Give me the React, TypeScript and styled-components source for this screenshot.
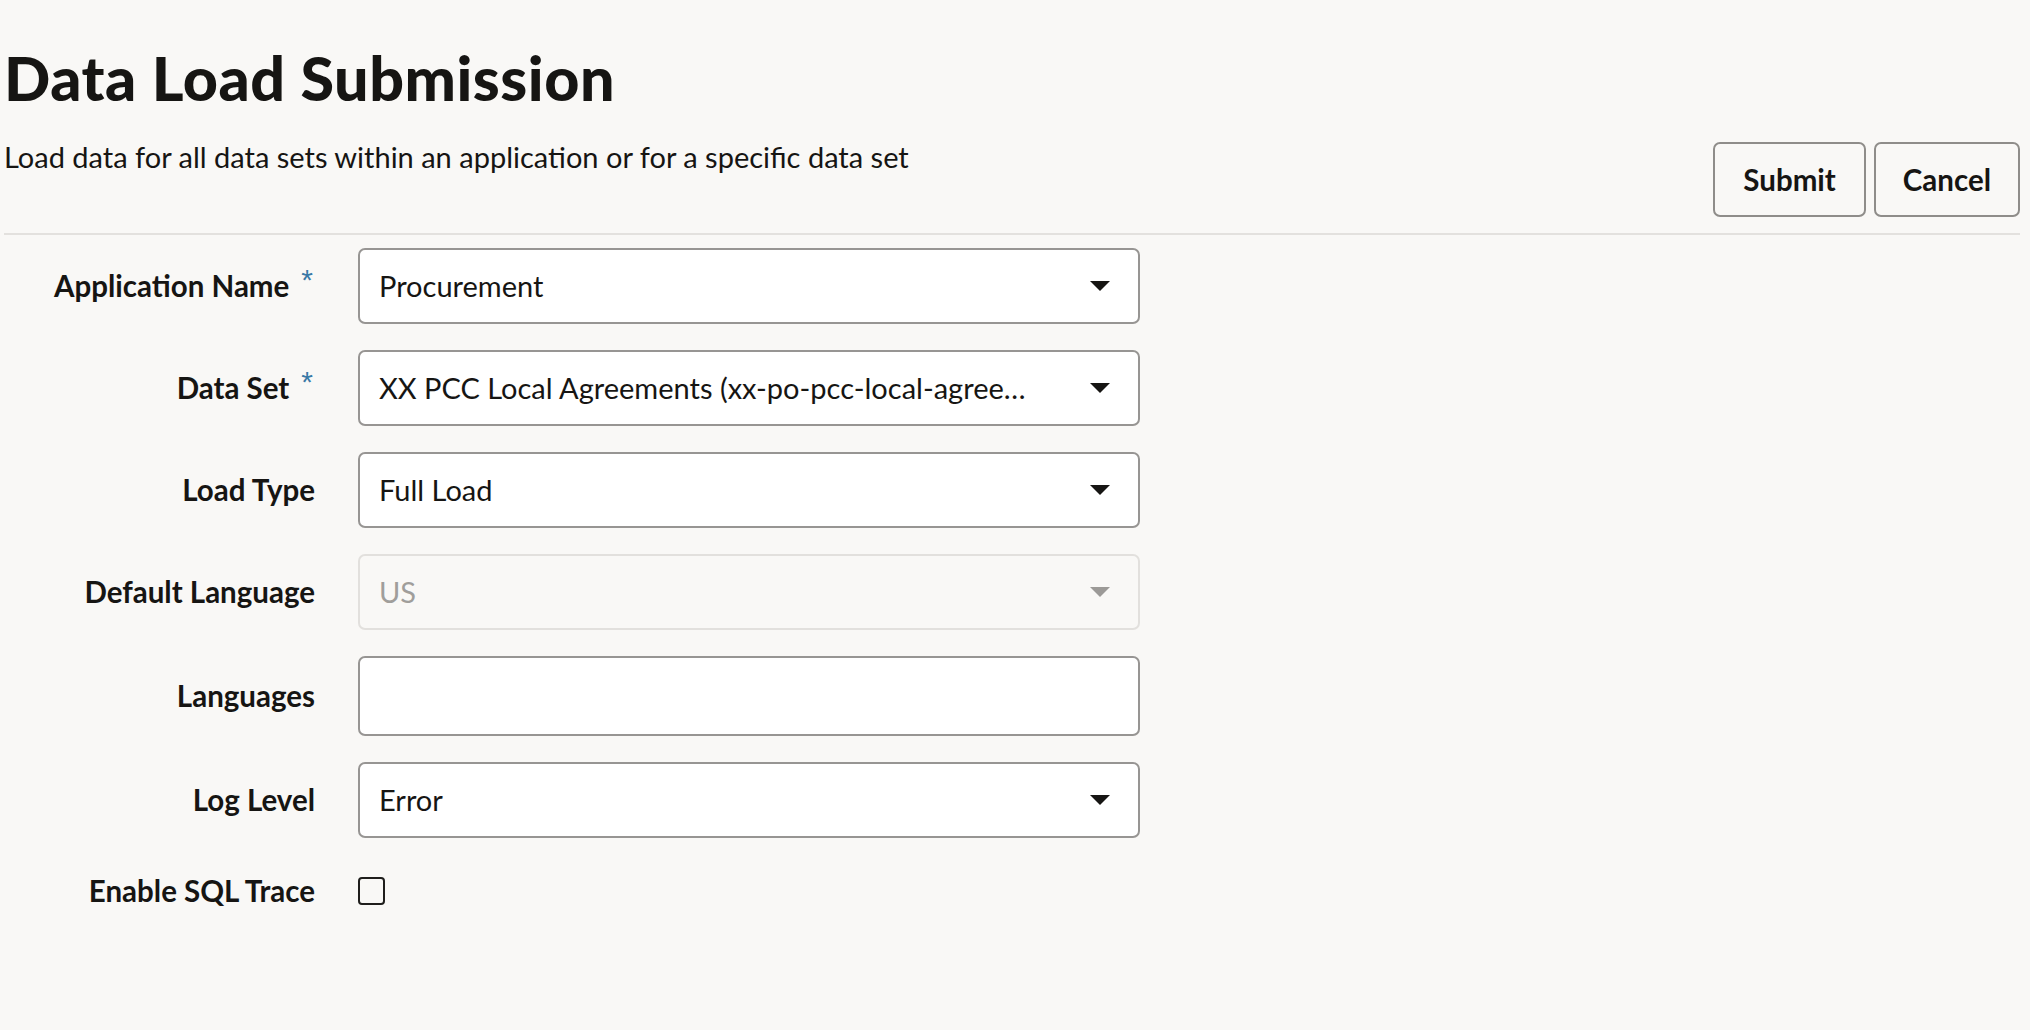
import React from 'react';
import styled, { createGlobalStyle } from 'styled-components';

const GlobalStyle = createGlobalStyle`
  html, body { margin: 0; padding: 0; background: #f9f8f6; }
  body { font-family: Lato, "Liberation Sans", sans-serif; color: #161513; }
  * { box-sizing: border-box; }
`;

const Page = styled.div`
  padding: 0 10px 0 4px;
  min-height: 1030px;
`;

const Title = styled.h1`
  margin: 0;
  padding-top: 42px;
  font-size: 61px;
  line-height: 72px;
  font-weight: 900;
  letter-spacing: 0.5px;
`;

const SubRow = styled.div`
  display: flex;
  justify-content: space-between;
  align-items: flex-start;
  margin-top: 25px;
  padding-bottom: 16px;
  border-bottom: 2px solid #e3e1de;
`;

const Subtitle = styled.p`
  margin: 0;
  font-size: 29px;
  line-height: 36px;
  font-weight: 400;
`;

const Toolbar = styled.div`
  display: flex;
  gap: 8px;
  margin-top: 3px;
`;

const Button = styled.button<{ $px?: number }>`
  height: 75px;
  padding: 0 ${(p) => p.$px ?? 30}px;
  border: 2px solid #8f8d8a;
  border-radius: 7px;
  background: transparent;
  color: #161513;
  font-family: Lato, "Liberation Sans", sans-serif;
  font-size: 29.5px;
  font-weight: 700;
  cursor: pointer;
`;

const Form = styled.div`
  display: grid;
  grid-template-columns: 311px 782px;
  column-gap: 43px;
  row-gap: 26px;
  align-items: center;
  padding-top: 13px;
`;

const Label = styled.div`
  display: flex;
  justify-content: flex-end;
  align-items: flex-start;
  font-size: 29.5px;
  line-height: 36px;
  font-weight: 700;
  white-space: nowrap;
`;

const Required = styled.span`
  color: #3a79a6;
  font-family: "Liberation Sans", Arial, sans-serif;
  font-size: 30px;
  line-height: 30px;
  font-weight: 400;
  margin-left: 12px;
  margin-right: 2px;
  margin-top: -3px;
`;

const Field = styled.div<{ $disabled?: boolean; $tall?: boolean }>`
  display: flex;
  align-items: center;
  height: ${(p) => (p.$tall ? 80 : 76)}px;
  padding: 0 28px 0 19px;
  border: 2px solid ${(p) => (p.$disabled ? '#e2e0dd' : '#979593')};
  border-radius: 7px;
  background: ${(p) => (p.$disabled ? 'transparent' : '#ffffff')};
  color: ${(p) => (p.$disabled ? '#a09e9b' : '#161513')};
`;

const Value = styled.span`
  flex: 1;
  min-width: 0;
  font-size: 29px;
  line-height: 36px;
  white-space: nowrap;
  overflow: hidden;
  text-overflow: ellipsis;
`;

const CheckCell = styled.div`
  display: flex;
  align-items: center;
  padding: 13px 0;
`;

const Checkbox = styled.span`
  display: block;
  width: 27px;
  height: 28px;
  border: 2.5px solid #1f1e1c;
  border-radius: 4px;
  background: transparent;
`;

const Caret = ({ color }: { color: string }) => (
  <svg width="20" height="10" viewBox="0 0 20 10" aria-hidden="true">
    <polygon points="0,0 20,0 10,10" fill={color} />
  </svg>
);

type Row = {
  label: string;
  required?: boolean;
  value?: string;
  disabled?: boolean;
  select?: boolean;
  tall?: boolean;
};

const rows: Row[] = [
  { label: 'Application Name', required: true, value: 'Procurement', select: true },
  { label: 'Data Set', required: true, value: 'XX PCC Local Agreements (xx-po-pcc-local-agree…', select: true },
  { label: 'Load Type', value: 'Full Load', select: true },
  { label: 'Default Language', value: 'US', select: true, disabled: true },
  { label: 'Languages', value: '', tall: true },
  { label: 'Log Level', value: 'Error', select: true },
];

export default function App() {
  return (
    <>
      <GlobalStyle />
      <Page>
        <Title>Data Load Submission</Title>
        <SubRow>
          <Subtitle>Load data for all data sets within an application or for a specific data set</Subtitle>
          <Toolbar>
            <Button $px={28}>Submit</Button>
            <Button $px={27}>Cancel</Button>
          </Toolbar>
        </SubRow>
        <Form>
          {rows.map((r) => (
            <React.Fragment key={r.label}>
              <Label>
                {r.label}
                {r.required && <Required>*</Required>}
              </Label>
              <Field $disabled={r.disabled} $tall={r.tall}>
                <Value>{r.value}</Value>
                {r.select && <Caret color={r.disabled ? '#9c9a97' : '#161513'} />}
              </Field>
            </React.Fragment>
          ))}
          <Label>Enable SQL Trace</Label>
          <CheckCell>
            <Checkbox role="checkbox" aria-checked="false" />
          </CheckCell>
        </Form>
      </Page>
    </>
  );
}
